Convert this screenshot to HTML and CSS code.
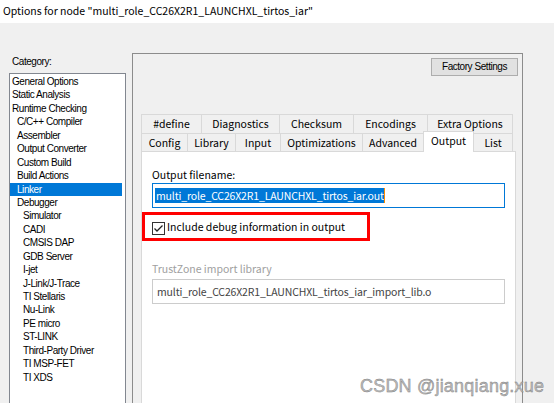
FILE: index.html
```html
<!DOCTYPE html>
<html>
<head>
<meta charset="utf-8">
<link rel="stylesheet" href="styles.css">
</head>
<body>
<div class="titlebar">Options for node "multi_role_CC26X2R1_LAUNCHXL_tirtos_iar"</div>
<div class="main">
  <div class="left">
    <div class="cat-label">Category:</div>
    <ul class="catlist">
      <li class="l0">General Options</li>
      <li class="l0">Static Analysis</li>
      <li class="l0">Runtime Checking</li>
      <li class="l1">C/C++ Compiler</li>
      <li class="l1">Assembler</li>
      <li class="l1">Output Converter</li>
      <li class="l1">Custom Build</li>
      <li class="l1">Build Actions</li>
      <li class="l1 selected">Linker</li>
      <li class="l1">Debugger</li>
      <li class="l2">Simulator</li>
      <li class="l2">CADI</li>
      <li class="l2">CMSIS DAP</li>
      <li class="l2">GDB Server</li>
      <li class="l2">I-jet</li>
      <li class="l2">J-Link/J-Trace</li>
      <li class="l2">TI Stellaris</li>
      <li class="l2">Nu-Link</li>
      <li class="l2">PE micro</li>
      <li class="l2">ST-LINK</li>
      <li class="l2">Third-Party Driver</li>
      <li class="l2">TI MSP-FET</li>
      <li class="l2">TI XDS</li>
    </ul>
  </div>
  <div class="frame">
    <div class="frame-top"><div class="btn">Factory Settings</div></div>
    <div class="tabs">
      <div class="tabrow row1">
        <div class="tab">#define</div>
        <div class="tab">Diagnostics</div>
        <div class="tab">Checksum</div>
        <div class="tab">Encodings</div>
        <div class="tab">Extra Options</div>
      </div>
      <div class="tabrow row2">
        <div class="tab">Config</div>
        <div class="tab">Library</div>
        <div class="tab">Input</div>
        <div class="tab">Optimizations</div>
        <div class="tab">Advanced</div>
        <div class="tab active">Output</div>
        <div class="tab">List</div>
      </div>
    </div>
    <div class="panel">
      <div class="field-label">Output filename:</div>
      <div class="textbox focused"><span class="sel">multi_role_CC26X2R1_LAUNCHXL_tirtos_iar.out</span><span class="caret"></span></div>
      <div class="check-row">
        <span class="checkbox"><svg width="13" height="13" viewBox="0 0 13 13"><rect x="0.5" y="0.5" width="12" height="12" fill="#fff" stroke="#333"/><path d="M2.5 6.5 L5 9 L10.5 3.5" fill="none" stroke="#222" stroke-width="1.3"/></svg></span>
        <span class="check-text">Include debug information in output</span>
        <div class="annot"></div>
      </div>
      <div class="field-label disabled">TrustZone import library</div>
      <div class="textbox disabled">multi_role_CC26X2R1_LAUNCHXL_tirtos_iar_import_lib.o</div>
    </div>
  </div>
</div>
<div class="watermark">CSDN @jianqiang.xue</div>
</body>
</html>
```
FILE: styles.css
```css
html, body {
  margin: 0;
  padding: 0;
}
body {
  width: 554px;
  height: 403px;
  overflow: hidden;
  background: #f0f0f0;
  font-family: "Noto Sans CJK SC", "Liberation Sans", sans-serif;
  font-size: 10.5px;
  color: #000;
  position: relative;
}
.titlebar {
  height: 23px;
  background: #fff;
  line-height: 21px;
  padding-left: 3px;
  white-space: nowrap;
}
.main {
  display: flex;
  align-items: flex-start;
  padding-left: 9px;
}
.left {
  width: 117px;
  margin-top: 32px;
  font-family: "Liberation Sans", sans-serif;
  font-size: 10px;
  letter-spacing: -0.45px;
}
.cat-label {
  height: 14px;
  line-height: 14px;
  padding-left: 3px;
  margin-bottom: 4px;
}
.catlist {
  list-style: none;
  margin: 0;
  padding: 1px 3px 0 0;
  background: #fff;
  border: 1px solid #828790;
  border-bottom: none;
  box-sizing: border-box;
  height: 330px;
  overflow: hidden;
}
.catlist li {
  height: 13.45px;
  line-height: 13.45px;
  white-space: nowrap;
}
.catlist .l0 { padding-left: 2px; }
.catlist .l1 { padding-left: 7px; }
.catlist .l2 { padding-left: 13px; }
.catlist .selected {
  background: #0078d7;
  color: #fff;
}
.frame {
  margin-left: 6px;
  margin-top: 30px;
  width: 377px;
  height: 345px;
  border: 1px solid #8c8c8c;
  border-bottom: none;
  padding: 4px 4px 0 8px;
  box-sizing: content-box;
  overflow: hidden;
}
.frame-top {
  display: flex;
  justify-content: flex-end;
  height: 18px;
  margin-bottom: 38px;
}
.btn {
  width: 85px;
  height: 16px;
  line-height: 16px;
  text-align: center;
  background: #e1e1e1;
  border: 1px solid #adadad;
  font-family: "Liberation Sans", sans-serif;
  font-size: 10px;
  letter-spacing: -0.45px;
}
.tabs {
  width: 372px;
}
.tabrow {
  display: flex;
}
.tab {
  box-sizing: border-box;
  text-align: center;
  border: 1px solid #d9d9d9;
  border-bottom: none;
  margin-right: -1px;
  background: #f0f0f0;
  white-space: nowrap;
}
.row1 .tab {
  height: 19px;
  line-height: 18px;
}
.row2 .tab {
  height: 18px;
  line-height: 17px;
}
.row1 .tab:nth-child(1) { width: 61px; }
.row1 .tab:nth-child(2) { width: 79px; }
.row1 .tab:nth-child(3) { width: 75px; }
.row1 .tab:nth-child(4) { width: 75px; }
.row1 .tab:nth-child(5) { width: 86px; }
.row2 .tab:nth-child(1) { width: 47px; }
.row2 .tab:nth-child(2) { width: 49px; }
.row2 .tab:nth-child(3) { width: 46px; }
.row2 .tab:nth-child(4) { width: 83px; }
.row2 .tab:nth-child(5) { width: 62px; }
.row2 .tab:nth-child(6) { width: 51px; }
.row2 .tab:nth-child(7) { width: 40px; }
.row2 .tab.active {
  background: #fff;
  height: 21px;
  margin-top: -2px;
  margin-bottom: -1px;
  line-height: 18px;
  position: relative;
  z-index: 1;
}
.panel {
  width: 375px;
  height: 252px;
  box-sizing: border-box;
  background: #fff;
  border: 1px solid #d9d9d9;
  border-bottom: none;
  padding: 16px 10px 0 10px;
}
.field-label {
  height: 14px;
  line-height: 14px;
  margin-bottom: 1px;
}
.field-label.disabled {
  color: #a0a0a0;
  margin-top: 28px;
  margin-bottom: 3px;
}
.textbox {
  box-sizing: border-box;
  height: 25px;
  border: 1px solid #7a7a7a;
  background: #fff;
  display: flex;
  align-items: center;
  white-space: nowrap;
  letter-spacing: -0.15px;
}
.textbox.focused {
  border-color: #0078d7;
  padding-left: 2px;
}
.sel {
  background: #0078d7;
  color: #fff;
  line-height: 15px;
  padding-left: 1px;
}
.caret {
  display: inline-block;
  width: 1px;
  height: 15px;
  background: #ff8c00;
}
.textbox.disabled {
  border-color: #cccccc;
  color: #444;
  padding-left: 4px;
}
.check-row {
  position: relative;
  display: flex;
  align-items: center;
  height: 14px;
  margin-top: 12px;
}
.checkbox {
  display: flex;
  width: 13px;
  height: 13px;
  margin-top: 2px;
  margin-right: 2px;
}
.check-text {
  line-height: 14px;
}
.annot {
  position: absolute;
  left: -10px;
  top: -8px;
  width: 222px;
  height: 23px;
  border: 3px solid #ff0000;
}
.watermark {
  position: absolute;
  left: 360px;
  top: 376px;
  font-family: "Liberation Sans", sans-serif;
  font-size: 18px;
  color: #bdbdbd;
  letter-spacing: 0.2px;
  -webkit-text-stroke: 0.4px #7a7a7a;
  white-space: nowrap;
}
```
